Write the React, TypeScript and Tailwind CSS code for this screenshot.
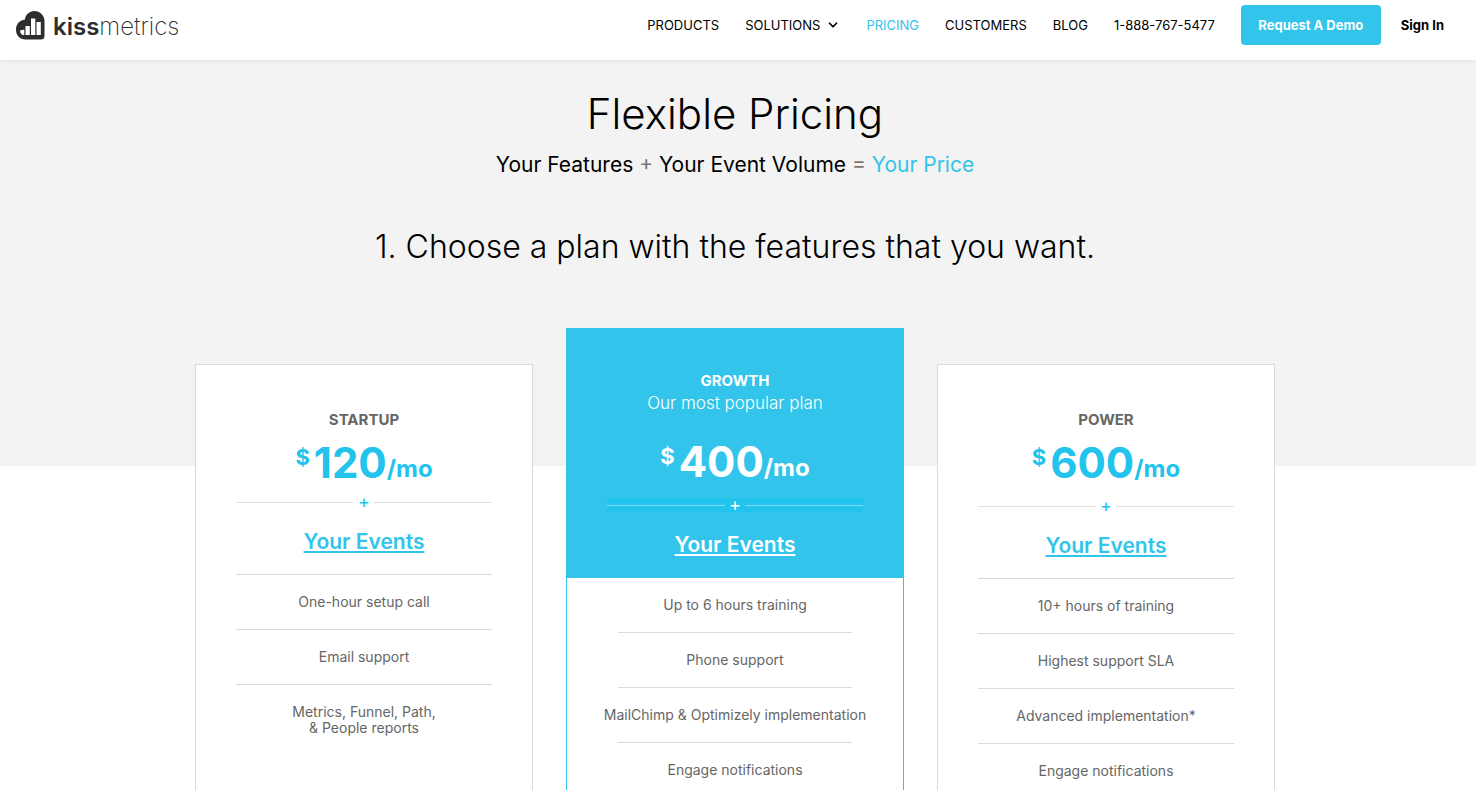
import { ChevronDown } from "lucide-react";
import clsx from "clsx";

type Plan = {
    name: string;
    tagline?: string;
    price: string;
    features: string[];
    popular?: boolean;
    compact?: boolean;
};

const plans: Plan[] = [
    {
        name: "STARTUP",
        price: "120",
        features: ["One-hour setup call", "Email support", "Metrics, Funnel, Path,\n& People reports"],
        compact: true,
    },
    {
        name: "GROWTH",
        tagline: "Our most popular plan",
        price: "400",
        features: [
            "Up to 6 hours training",
            "Phone support",
            "MailChimp & Optimizely implementation",
            "Engage notifications",
        ],
        popular: true,
    },
    {
        name: "POWER",
        price: "600",
        features: [
            "10+ hours of training",
            "Highest support SLA",
            "Advanced implementation*",
            "Engage notifications",
        ],
    },
];

const Logo = () => (
    <a href="#" className="flex items-center gap-2 text-[#2d2d2d]">
        <svg width="29" height="29" viewBox="0 0 29 29" aria-hidden="true">
            <path
                d="M8.800 8.800C9.300 3.500 13.500 0 18.500 0C24 0 28.500 4.500 28.500 10V25Q28.500 28.500 25 28.500H9.500C4 28.500 0 24.300 0 18.700C0 13 4 8.900 8.800 8.800Z"
                fill="currentColor"
            />
            <path
                d="M4 19.500L8.300 18.500V24H7.500C5.500 24 4 22 4 19.500zM9.500 15h4.300v9H9.500zM15 7.500h4.300V24H15zM20.500 11h4.300v13h-4.300z"
                fill="#fff"
            />
        </svg>
        <span className="mt-1 text-2xl leading-7">
            <span className="font-semibold">kiss</span>
            <span className="font-extralight">metrics</span>
        </span>
    </a>
);

const Header = () => (
    <header className="relative flex h-[60px] items-center justify-between bg-white pr-8 pl-4 pb-2.5 shadow-[0_1px_4px_rgba(0,0,0,0.08)]">
        <Logo />
        <nav className="flex items-center gap-[26px] text-[13px] leading-5 text-black">
            <a href="#">PRODUCTS</a>
            <a href="#" className="flex items-center gap-1.5">
                SOLUTIONS
                <ChevronDown className="size-3.5" strokeWidth={3} />
            </a>
            <a href="#" className="text-[#32c4ea]">PRICING</a>
            <a href="#">CUSTOMERS</a>
            <a href="#">BLOG</a>
            <a href="#">1-888-767-5477</a>
            <div className="flex items-center gap-5 font-bold">
                <button type="button" className="h-10 w-[140px] rounded bg-[#32c4ea] text-white">
                    Request A Demo
                </button>
                <a href="#">Sign In</a>
            </div>
        </nav>
    </header>
);

const PlanCard = ({ name, tagline, price, features, popular, compact }: Plan) => (
    <article
        className={clsx(
            "border bg-white text-center",
            popular ? "border-[#32c4ea]" : "mt-9 border-[#d9d9d9]",
        )}
    >
        <div className={clsx("px-10", popular ? "bg-[#32c4ea] pt-[41px] text-white" : "pt-11 text-[#22c3ec]")}>
            <h3 className={clsx("text-[15px] leading-[22px] font-bold", !popular && "text-[#666]")}>{name}</h3>
            {tagline && <p className="text-[17px] leading-[22px] font-light">{tagline}</p>}
            <p className={clsx("flex justify-center font-bold", popular ? "mt-[26px]" : "mt-2.5")}>
                <span className="mr-1 text-[22px] leading-8">$</span>
                <span className="text-[42px] leading-[44px]">{price}</span>
                <span className="self-end text-2xl leading-8">/mo</span>
            </p>
            <div
                className={clsx(
                    "flex h-3.5 items-center gap-1",
                    compact ? "mt-2.5" : "mt-3.5",
                    popular && "bg-[#22c3ec]",
                )}
            >
                <span className={clsx("h-px flex-1", popular ? "bg-[#7ddcf3]" : "bg-[#e2e2e2]")} />
                <span className="text-lg leading-4">+</span>
                <span className={clsx("h-px flex-1", popular ? "bg-[#7ddcf3]" : "bg-[#e2e2e2]")} />
            </div>
            <div className={clsx("pt-[19px]", popular ? "pb-[19px]" : "pb-[18px]")}>
                <a
                    href="#"
                    className={clsx("text-[21px] leading-7 font-semibold underline", !popular && "text-[#32c4ea]")}
                >
                    Your Events
                </a>
            </div>
        </div>
        <ul className={clsx("pb-4 text-sm leading-4 text-[#666]", popular ? "px-[51px]" : "px-10")}>
            {features.map((feature) => (
                <li
                    key={feature}
                    className={clsx(
                        "flex justify-center border-t border-[#d9d9d9] py-[19px] whitespace-pre",
                        popular && "first:border-t-0",
                    )}
                >
                    {feature}
                </li>
            ))}
        </ul>
    </article>
);

export default function App() {
    return (
        <div className="min-h-screen bg-white font-['Inter',sans-serif] text-black">
            <Header />
            <main>
                <section className="bg-[#f3f3f3] pt-7 pr-1.5 pb-[199px] text-center">
                    <h1 className="text-[42px] leading-[52px] font-light">Flexible Pricing</h1>
                    <p className="mt-[9px] text-[21px] leading-8">
                        Your Features <span className="text-[#777]">+</span> Your Event Volume{" "}
                        <span className="text-[#777]">=</span> <span className="text-[#32c4ea]">Your Price</span>
                    </p>
                    <h2 className="mt-[46px] text-[32px] leading-10 font-light">
                        1. Choose a plan with the features that you want.
                    </h2>
                </section>

                {/* Cards overlap the grey band above */}
                <section className="relative -mt-[138px] pr-1.5">
                    <div className="mx-auto grid max-w-[1080px] grid-cols-3 gap-[33px]">
                        {plans.map((plan) => (
                            <PlanCard key={plan.name} {...plan} />
                        ))}
                    </div>
                </section>
            </main>
        </div>
    );
}
